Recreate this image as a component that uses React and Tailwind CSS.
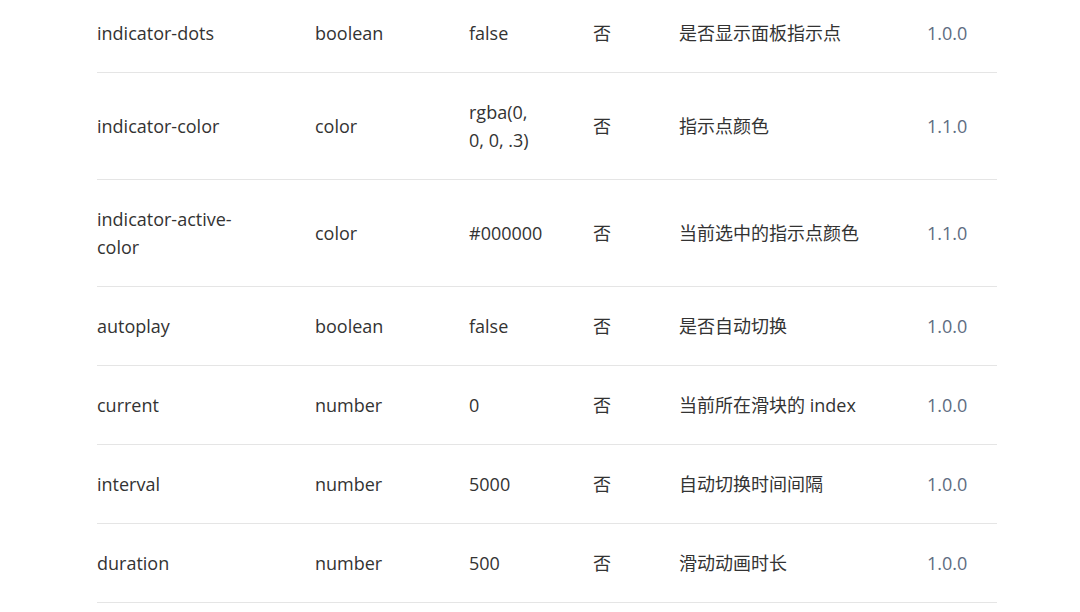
import React from "react";

const rows = [
  ["indicator-dots", "boolean", "false", "否", "是否显示面板指示点", "1.0.0"],
  ["indicator-color", "color", "rgba(0, 0, 0, .3)", "否", "指示点颜色", "1.1.0"],
  ["indicator-active-color", "color", "#000000", "否", "当前选中的指示点颜色", "1.1.0"],
  ["autoplay", "boolean", "false", "否", "是否自动切换", "1.0.0"],
  ["current", "number", "0", "否", "当前所在滑块的 index", "1.0.0"],
  ["interval", "number", "5000", "否", "自动切换时间间隔", "1.0.0"],
  ["duration", "number", "500", "否", "滑动动画时长", "1.0.0"],
];

export default function App() {
  return (
    <div
      className="w-[1080px] h-[612px] overflow-hidden bg-white text-[#333] text-[18px] leading-[28px]"
      style={{ fontFamily: '"Open Sans", "Noto Sans CJK SC", sans-serif' }}
    >
      <div className="ml-[97px] w-[900px] -mt-[6px]">
        {rows.map((r) => (
          <div
            key={r[0]}
            className="grid grid-cols-[218px_154px_124px_86px_248px_70px] items-center py-[25px] border-b border-[#e5e5e5]"
          >
            <div className="pr-[60px]">{r[0]}</div>
            <div className="pr-[40px]">{r[1]}</div>
            <div className="pr-[49px]">{r[2]}</div>
            <div>{r[3]}</div>
            <div className="pr-[20px]">{r[4]}</div>
            <div className="whitespace-nowrap text-[#5e6d82]">{r[5]}</div>
          </div>
        ))}
      </div>
    </div>
  );
}
